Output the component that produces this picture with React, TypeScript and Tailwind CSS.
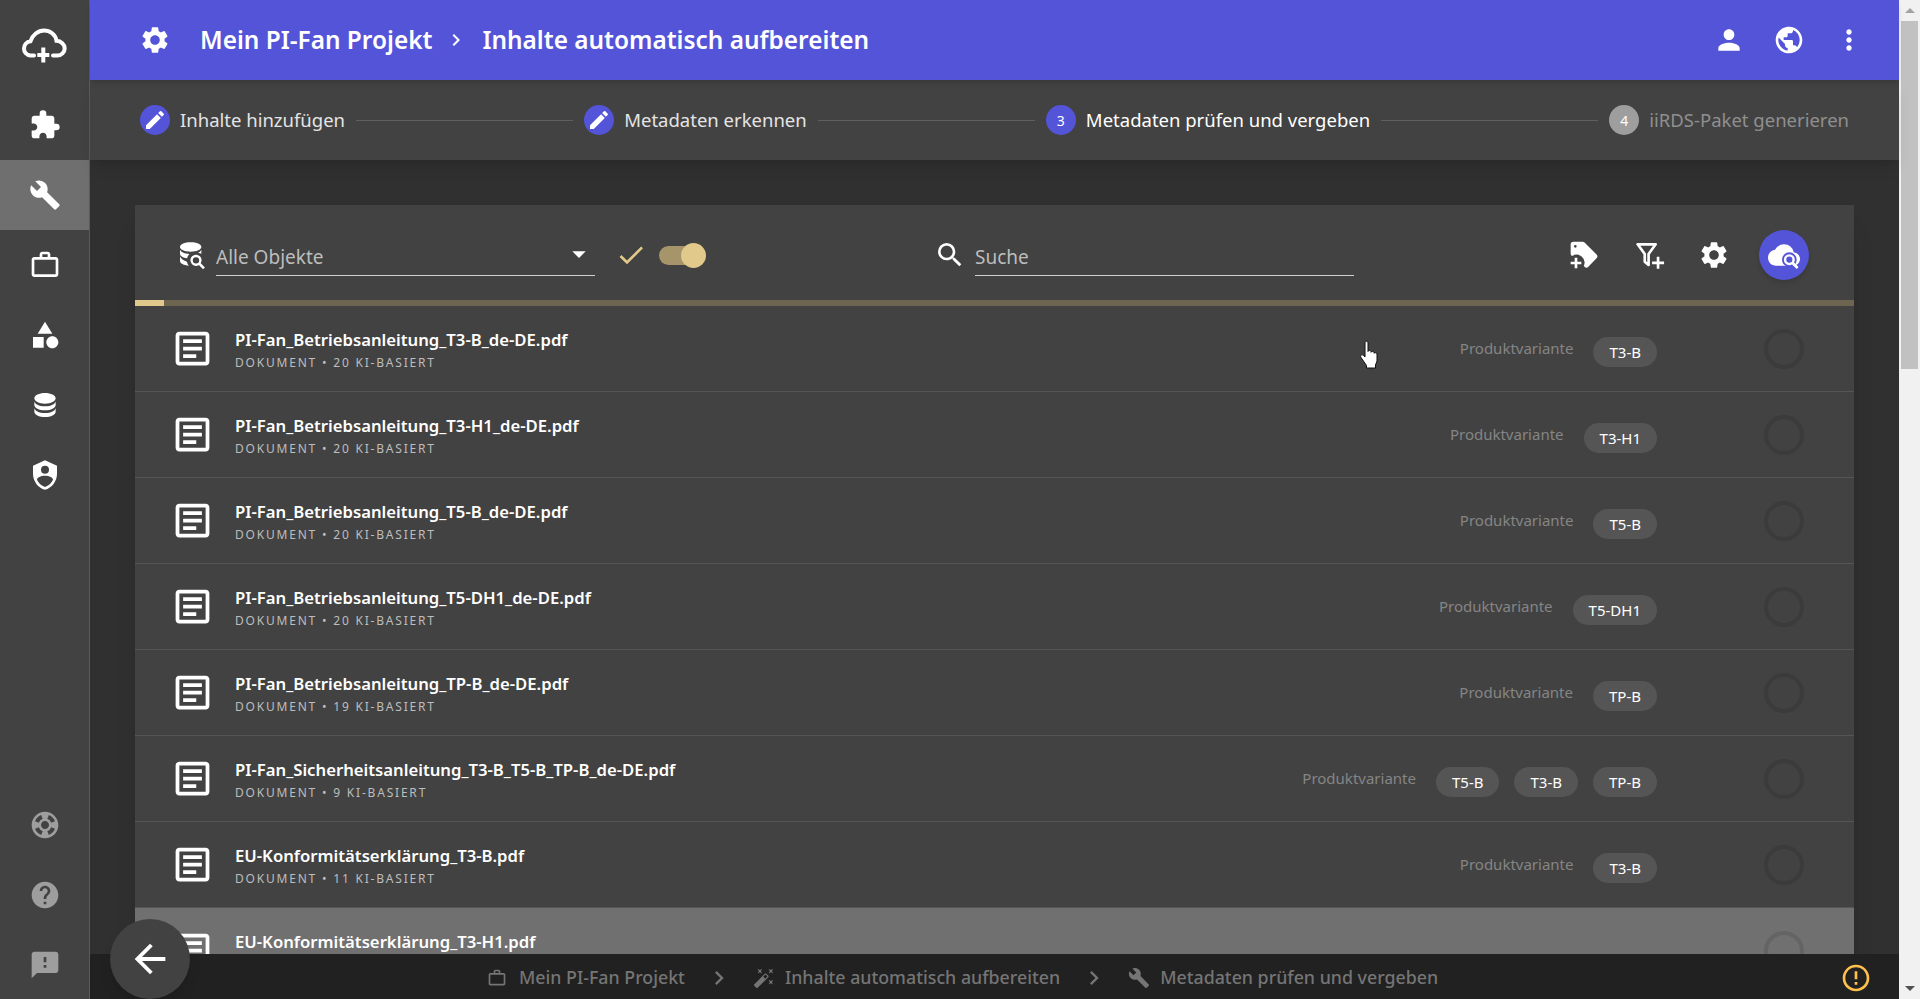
import {
  MdArrowBack,
  MdArrowDropDown,
  MdAutoFixHigh,
  MdBuild,
  MdCheck,
  MdChevronRight,
  MdErrorOutline,
  MdExtension,
  MdEdit,
  MdFeedback,
  MdHelp,
  MdMoreVert,
  MdOutlineArticle,
  MdWorkOutline,
  MdPerson,
  MdPublic,
  MdSearch,
  MdSettings,
  MdSupport,
} from "react-icons/md"

const files = [
  { name: "PI-Fan_Betriebsanleitung_T3-B_de-DE.pdf", count: 20, tags: ["T3-B"] },
  { name: "PI-Fan_Betriebsanleitung_T3-H1_de-DE.pdf", count: 20, tags: ["T3-H1"] },
  { name: "PI-Fan_Betriebsanleitung_T5-B_de-DE.pdf", count: 20, tags: ["T5-B"] },
  { name: "PI-Fan_Betriebsanleitung_T5-DH1_de-DE.pdf", count: 20, tags: ["T5-DH1"] },
  { name: "PI-Fan_Betriebsanleitung_TP-B_de-DE.pdf", count: 19, tags: ["TP-B"] },
  { name: "PI-Fan_Sicherheitsanleitung_T3-B_T5-B_TP-B_de-DE.pdf", count: 9, tags: ["T5-B", "T3-B", "TP-B"] },
  { name: "EU-Konformitätserklärung_T3-B.pdf", count: 11, tags: ["T3-B"] },
  { name: "EU-Konformitätserklärung_T3-H1.pdf", count: 0, tags: [], active: true },
]

function Mdi({ d, className }: { d: string; className?: string }) {
  return (
    <svg viewBox="0 0 24 24" fill="currentColor" fillRule="evenodd" className={className}>
      <path d={d} />
    </svg>
  )
}

function LogoIcon() {
  return (
    <svg viewBox="0 0 48 36" className="h-[36px] w-[48px]" fill="none" stroke="white" strokeWidth="4" strokeLinecap="round">
      <path d="M13 28.500h-3.500C5.500 28.500 3 25 3 21.500c0-3.500 2.500-6.800 6.500-7.300C11.500 8 17 3.500 23 3.500c6 0 11.500 4 12.500 10.300 4.500.3 8.200 3.600 8.200 7.500 0 4-3.300 7.200-7.200 7.200H32" />
      <path d="M22.300 20.500v15M16.300 28h12" strokeLinecap="butt" />
    </svg>
  )
}

function DatabaseSearchIcon() {
  return (
    <svg viewBox="0 0 24 24" className="h-[32px] w-[32px] text-white" fill="currentColor">
      <path d="M11 2.500c-4.400 0-8 1.500-8 3.500s3.600 3.500 8 3.500 8-1.500 8-3.500-3.600-3.500-8-3.500z" />
      <path d="M3 8v3.200c0 1.500 2.300 2.800 5.400 3.300.2-1.300.8-2.400 1.700-3.300C6.500 11 3.800 9.800 3 8zM19 8c-.4.900-1.300 1.700-2.500 2.300.9.100 1.700.4 2.500.8V8z" />
      <path d="M3 13.200v3.300c0 1.800 2.800 3.200 6.600 3.500-.7-.8-1.200-1.800-1.400-3-2.300-.4-4.200-2.100-5.200-3.800z" />
      <circle cx="15" cy="16" r="3.300" fill="none" stroke="currentColor" strokeWidth="1.800" />
      <path d="M17.500 18.500l3.500 3.500" stroke="currentColor" strokeWidth="2" />
    </svg>
  )
}

function FilterPlusIcon() {
  return (
    <svg viewBox="0 0 24 24" className="h-[32px] w-[32px]" fill="none" stroke="currentColor" strokeWidth="2">
      <path d="M3.500 4h13.500l-5.300 7.200v8.300l-2.900-2.500v-5.800z" strokeLinejoin="round" />
      <path d="M18.800 13.400v9M14.300 17.900h9" />
    </svg>
  )
}

function CloudSearchIcon() {
  return (
    <svg viewBox="0 0 24 24" className="h-[32px] w-[32px] text-white" fill="currentColor">
      <path d="M19.350 10.040C18.670 6.590 15.640 4 12 4 9.110 4 6.600 5.640 5.350 8.040 2.340 8.360 0 10.910 0 14c0 3.310 2.690 6 6 6h13c2.760 0 5-2.240 5-5 0-2.640-2.050-4.780-4.650-4.960z" />
      <circle cx="16" cy="15.500" r="5.500" fill="#5454d9" />
      <circle cx="16" cy="15.500" r="3.200" fill="none" stroke="currentColor" strokeWidth="1.800" />
      <path d="M18.500 18l3.700 3.700" stroke="currentColor" strokeWidth="2" />
    </svg>
  )
}

function HandCursor() {
  return (
    <svg viewBox="0 0 20 29" className="h-[29px] w-[20px]" fill="white" stroke="#111111" strokeWidth="1" strokeLinejoin="round">
      <path d="M5 3c0-2.300 3-2.300 3 0v8.500c.3-1.300 2.600-1.300 3 0v.8c.4-1.200 2.600-1.100 3 .2v.8c.5-1 2.800-.8 3 .7V21l-1.500 4v3H6.500v-2.500L1 17.500c-1.200-2 .7-3.500 2.300-2.200L5 17V3z" />
    </svg>
  )
}

const sideIcons = "h-[32px] w-[32px]"

function SideItem({ children, active, dim }: { children: React.ReactNode; active?: boolean; dim?: boolean }) {
  return (
    <div className={`flex h-[70px] items-center justify-center ${active ? "bg-[#6f6f6f]" : ""} ${dim ? "text-[#9e9e9e]" : "text-white"}`}>
      {children}
    </div>
  )
}

function Sidebar() {
  return (
    <aside className="flex h-full w-[90px] shrink-0 flex-col border-r border-[#5a5a5a] bg-[#424242]">
      <div className="flex h-[90px] items-center justify-center">
        <LogoIcon />
      </div>
      <SideItem><MdExtension className={sideIcons} /></SideItem>
      <SideItem active><MdBuild className={sideIcons} /></SideItem>
      <SideItem><MdWorkOutline className={sideIcons} /></SideItem>
      <SideItem>
        <Mdi className={sideIcons} d="M11,13.5V21.500H3V13.500H11M12,2L17.500,11H6.500L12,2M17.500,13C20,13 22,15 22,17.500C22,20 20,22 17.500,22C15,22 13,20 13,17.500C13,15 15,13 17.500,13Z" />
      </SideItem>
      <SideItem>
        <Mdi className={sideIcons} d="M12,3C7.580,3 4,4.790 4,7C4,9.210 7.580,11 12,11C16.420,11 20,9.210 20,7C20,4.790 16.420,3 12,3M4,9V12C4,14.210 7.580,16 12,16C16.420,16 20,14.210 20,12V9C20,11.210 16.420,13 12,13C7.580,13 4,11.210 4,9M4,14V17C4,19.210 7.580,21 12,21C16.420,21 20,19.210 20,17V14C20,16.210 16.420,18 12,18C7.580,18 4,16.210 4,14Z" />
      </SideItem>
      <SideItem>
        <Mdi className={sideIcons} d="M12,1L3,5V11C3,16.550 6.840,21.740 12,23C17.160,21.740 21,16.550 21,11V5L12,1M12,5A3,3 0 0,1 15,8A3,3 0 0,1 12,11A3,3 0 0,1 9,8A3,3 0 0,1 12,5M17.130,17C15.920,18.850 14.110,20.240 12,20.920C9.890,20.240 8.080,18.850 6.870,17C6.530,16.500 6.240,16 6,15.470C6,13.820 8.710,12.470 12,12.470C15.290,12.470 18,13.790 18,15.470C17.760,16 17.470,16.500 17.130,17Z" />
      </SideItem>
      <div className="mt-auto -mb-px">
        <SideItem dim><MdSupport className={sideIcons} /></SideItem>
        <SideItem dim><MdHelp className={sideIcons} /></SideItem>
        <SideItem dim><MdFeedback className={sideIcons} /></SideItem>
      </div>
    </aside>
  )
}

function TopBar() {
  return (
    <header className="relative z-20 flex h-[80px] shrink-0 items-center bg-[#5454d9] pl-[49px] pr-[34px] text-white shadow-md">
      <MdSettings className="h-[32px] w-[32px]" />
      <span className="ml-[29px] text-[24.4px] font-semibold">Mein PI-Fan Projekt</span>
      <MdChevronRight className="ml-[12px] h-[24px] w-[24px]" />
      <span className="ml-[14px] text-[24.4px] font-semibold">Inhalte automatisch aufbereiten</span>
      <div className="ml-auto flex items-center gap-[28px]">
        <MdPerson className="h-[32px] w-[32px]" />
        <MdPublic className="h-[32px] w-[32px]" />
        <MdMoreVert className="h-[32px] w-[32px]" />
      </div>
    </header>
  )
}

function StepDot({ children, grey }: { children: React.ReactNode; grey?: boolean }) {
  return (
    <span className={`flex h-[30px] w-[30px] shrink-0 items-center justify-center rounded-full text-[14px] text-white ${grey ? "bg-[#9e9e9e]" : "bg-[#5454d9]"}`}>
      {children}
    </span>
  )
}

function Stepper() {
  const line = <div className="mx-[11px] h-px flex-1 bg-[#5f5f5f]" />
  return (
    <div className="relative z-10 flex h-[80px] shrink-0 items-center bg-[#424242] pl-[50px] pr-[50px] text-[18.5px] shadow-lg">
      <StepDot><MdEdit className="h-[24px] w-[24px]" /></StepDot>
      <span className="ml-[10px] text-[#e4e4e4]">Inhalte hinzufügen</span>
      {line}
      <StepDot><MdEdit className="h-[24px] w-[24px]" /></StepDot>
      <span className="ml-[10px] text-[#e4e4e4]">Metadaten erkennen</span>
      {line}
      <StepDot>3</StepDot>
      <span className="ml-[10px] text-white">Metadaten prüfen und vergeben</span>
      {line}
      <StepDot grey>4</StepDot>
      <span className="ml-[10px] text-[#8f8f8f]">iiRDS-Paket generieren</span>
    </div>
  )
}

function Toolbar() {
  return (
    <div className="flex h-[95px] items-center pr-[45px] pt-[5px]">
      <div className="ml-[41px] flex w-[32px] justify-center pb-px">
        <DatabaseSearchIcon />
      </div>
      <div className="ml-[8px] flex h-[41px] w-[379px] items-center justify-between border-b border-[#d0d0d0] pt-[6px]">
        <span className="text-[19px] text-[#bdbdbd]">Alle Objekte</span>
        <MdArrowDropDown className="-mt-[8px] h-[32px] w-[32px] text-white" />
      </div>
      <MdCheck className="ml-[20px] h-[32px] w-[32px] text-[#e0c98a]" />
      <div className="relative ml-[12px] h-[19px] w-[43px] rounded-full bg-[#a6946a]">
        <span className="absolute -right-[4px] -top-[3px] h-[25px] w-[25px] rounded-full bg-[#e0c98a]" />
      </div>
      <MdSearch className="ml-[232px] h-[32px] w-[32px] text-white" />
      <div className="ml-[9px] flex h-[41px] w-[379px] items-center border-b border-[#d0d0d0] pt-[6px]">
        <span className="text-[19px] text-[#bdbdbd]">Suche</span>
      </div>
      <div className="ml-auto flex items-center gap-[33px] text-white">
        <Mdi className="h-[32px] w-[32px]" d="M21.410 11.580L12.410 2.580A2 2 0 0 0 11 2H4A2 2 0 0 0 2 4V11A2 2 0 0 0 2.590 12.420L3 12.820A6 6 0 0 1 11.830 20.240L12.420 20.830A2 2 0 0 0 15.250 20.830L21.410 14.410A2 2 0 0 0 21.410 11.580M5.500 6.500A1 1 0 1 1 6.500 5.500A1 1 0 0 1 5.500 6.500M10 19H7V22H5V19H2V17H5V14H7V17H10Z" />
        <FilterPlusIcon />
        <MdSettings className="h-[32px] w-[32px]" />
        <span className="-ml-[4px] flex h-[50px] w-[50px] items-center justify-center rounded-full bg-[#5454d9] shadow-md">
          <CloudSearchIcon />
        </span>
      </div>
    </div>
  )
}

function Row({ name, count, tags, active }: { name: string; count: number; tags: string[]; active?: boolean }) {
  return (
    <div className={`flex h-[86px] shrink-0 items-center border-b border-[#555555] pl-[35px] pr-[50px] ${active ? "bg-[#707070]" : ""}`}>
      <MdOutlineArticle className="h-[45px] w-[45px] shrink-0 text-white" />
      <div className="ml-[20px] mt-[1px]">
        <div className="text-[16.7px] font-semibold leading-[25px] text-white">{name}</div>
        <div className="mt-[2px] h-[18px] text-[12px] leading-[18px] tracking-[1.800px] text-[#bdbdbd]">
          {!active && `DOKUMENT • ${count} KI-BASIERT`}
        </div>
      </div>
      <div className="ml-auto flex items-center">
        {tags.length > 0 && <span className="mr-[20px] text-[15px] text-[#858585]">Produktvariante</span>}
        <div className="flex gap-[15px]">
          {tags.map((tag, i) => (
            <span key={i} className="mt-[6px] rounded-full bg-[#555555] px-[16px] text-[15px] leading-[30px] text-white">
              {tag}
            </span>
          ))}
        </div>
        <span className="ml-[107px] h-[40px] w-[40px] rounded-full border-[4px] border-black/10" />
      </div>
    </div>
  )
}

function BottomBar() {
  return (
    <div className="relative z-10 flex h-[45px] shrink-0 items-center bg-[#212121] pl-[397px] pr-[27px] pt-[2px] text-[17.8px] font-medium text-[#757575]">
      <MdWorkOutline className="h-[20px] w-[20px]" />
      <span className="ml-[12px]">Mein PI-Fan Projekt</span>
      <MdChevronRight className="ml-[20px] h-[28px] w-[28px]" />
      <MdAutoFixHigh className="ml-[20px] h-[22px] w-[22px]" />
      <span className="ml-[10px]">Inhalte automatisch aufbereiten</span>
      <MdChevronRight className="ml-[20px] h-[28px] w-[28px]" />
      <MdBuild className="ml-[20px] h-[22px] w-[22px]" />
      <span className="ml-[10px]">Metadaten prüfen und vergeben</span>
      <MdErrorOutline className="ml-auto h-[32px] w-[32px] text-[#ffc04c]" />
    </div>
  )
}

function FakeScrollbar() {
  return (
    <div className="flex h-full w-[21px] shrink-0 flex-col items-center bg-[#f1f1f1]">
      <div className="flex h-[21px] items-center justify-center">
        <span className="h-0 w-0 border-x-[5px] border-b-[5px] border-x-transparent border-b-[#a3a3a3]" />
      </div>
      <div className="h-[348px] w-[17px] bg-[#c1c1c1]" />
      <div className="mt-auto flex h-[21px] items-center justify-center">
        <span className="h-0 w-0 border-x-[5px] border-t-[5px] border-x-transparent border-t-[#505050]" />
      </div>
    </div>
  )
}

export default function App() {
  return (
    <div className="relative flex h-screen w-full overflow-hidden bg-[#303030] font-['Noto_Sans',sans-serif]">
      <Sidebar />
      <main className="flex min-w-0 flex-1 flex-col">
        <TopBar />
        <Stepper />
        <div className="min-h-0 flex-1 overflow-hidden px-[45px] pt-[45px]">
          <div className="bg-[#424242] shadow-xl">
            <Toolbar />
            <div className="flex h-[6px]">
              <div className="w-[29px] bg-[#e0c98a]" />
              <div className="flex-1 bg-[#6d6550]" />
            </div>
            <div className="flex flex-col">
              {files.map((file, i) => (
                <Row key={i} name={file.name} count={file.count} tags={file.tags} active={file.active} />
              ))}
            </div>
          </div>
        </div>
        <BottomBar />
      </main>
      <FakeScrollbar />

      {/* floating back button */}
      <button className="absolute bottom-0 left-[110px] z-30 flex h-[80px] w-[80px] items-center justify-center rounded-full bg-[#424242] text-white shadow-lg">
        <MdArrowBack className="h-[46px] w-[46px]" />
      </button>

      {/* mouse pointer caught in the screenshot */}
      <div className="absolute left-[1360px] top-[340px] z-30">
        <HandCursor />
      </div>
    </div>
  )
}
